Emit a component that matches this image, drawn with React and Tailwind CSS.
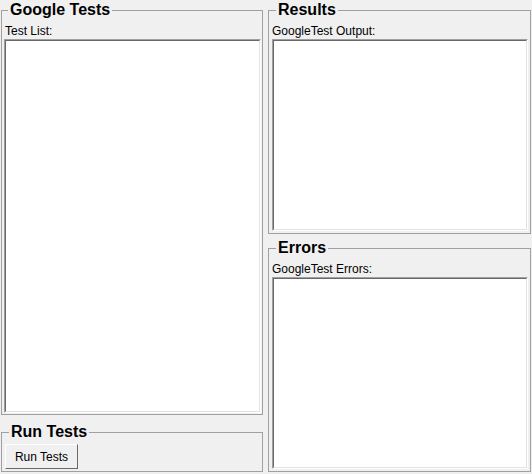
export default function App() {
    // sunken list / edit box, classic win32 look
    const Box = ({ h }) => (
        <div className={`${h} border border-t-[#a0a0a0] border-l-[#a0a0a0] border-b-white border-r-white`}>
            <div className="h-full border border-t-[#696969] border-l-[#696969] border-b-[#e3e3e3] border-r-[#e3e3e3] bg-white" />
        </div>
    );

    const Group = ({ title, className, children }) => (
        <fieldset className={`border border-[#a0a0a0] ${className}`}>
            <legend className="ml-[4px] px-[2px] text-[16px] leading-[18px] font-bold text-black">
                {title}
            </legend>
            {children}
        </fieldset>
    );

    return (
        <div
            className="w-[532px] h-[474px] bg-[#f0f0f0] flex gap-[5px] pl-[1px] pt-[1px] text-[12px] text-black overflow-hidden"
            style={{ fontFamily: '"Liberation Sans", Arial, sans-serif' }}
        >
            {/* left column */}
            <div className="w-[262px] flex flex-col gap-[8px]">
                <Group title="Google Tests" className="h-[414px] pl-[2px] pr-[1px] pt-[5px]">
                    <div className="leading-[14px] mb-[1px] pl-[1px]">Test List:</div>
                    <Box h="h-[374px]" />
                </Group>
                <Group title="Run Tests" className="h-[49px] pl-[3px] pt-[3px]">
                    <button className="w-[73px] h-[25px] border border-t-white border-l-white border-b-[#696969] border-r-[#696969] bg-[#f0f0f0] leading-[14px]">
                        Run Tests
                    </button>
                </Group>
            </div>

            {/* right column */}
            <div className="w-[263px] flex flex-col gap-[5px]">
                <Group title="Results" className="h-[233px] pl-[3px] pr-[2px] pt-[5px]">
                    <div className="leading-[14px] mb-[1px]">GoogleTest Output:</div>
                    <Box h="h-[192px]" />
                </Group>
                <Group title="Errors" className="h-[233px] pl-[3px] pr-[2px] pt-[5px]">
                    <div className="leading-[14px] mb-[1px]">GoogleTest Errors:</div>
                    <Box h="h-[192px]" />
                </Group>
            </div>
        </div>
    );
}
